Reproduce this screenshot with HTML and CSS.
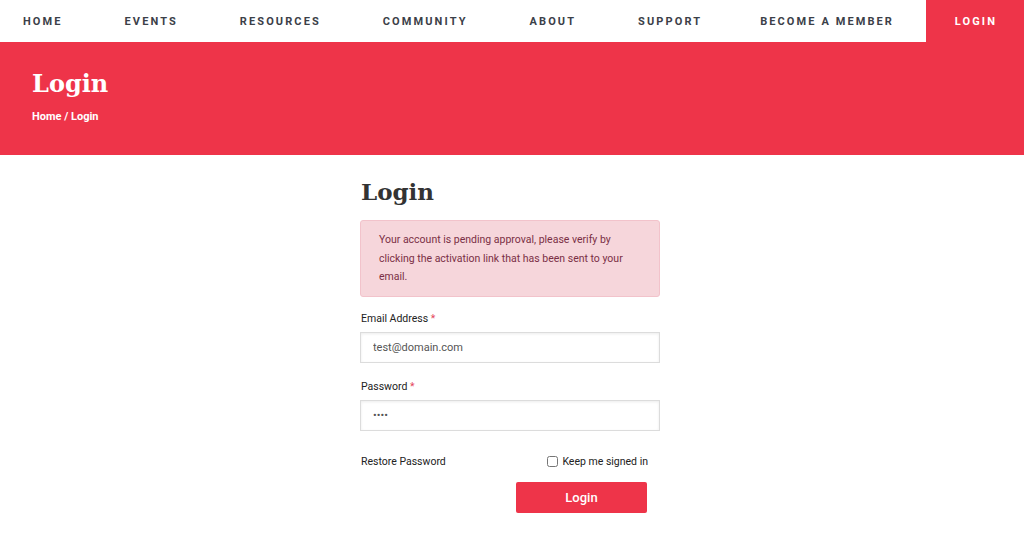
FILE: index.html
```html
<!DOCTYPE html>
<html lang="en">
  <head>
    <meta charset="UTF-8" />
    <meta name="viewport" content="width=device-width, initial-scale=1.0" />
    <title>Login</title>
    <link rel="stylesheet" href="styles.css">
  </head>
  <body>
    <nav class="nav">
      <a class="nav-item" href="#">Home</a>
      <a class="nav-item" href="#">Events</a>
      <a class="nav-item" href="#">Resources</a>
      <a class="nav-item" href="#">Community</a>
      <a class="nav-item" href="#">About</a>
      <a class="nav-item" href="#">Support</a>
      <a class="nav-item member" href="#">Become a Member</a>
      <a class="nav-item active" href="#">Login</a>
    </nav>
    <header class="banner">
      <h1 class="banner-title">Login</h1>
      <div class="crumbs"><a href="#">Home</a> / Login</div>
    </header>
    <main class="content">
      <h2 class="page-title">Login</h2>
      <div class="alert">
        Your account is pending approval, please verify by clicking the activation link that has been sent to your email.
      </div>
      <form class="form">
        <label class="label">Email Address <span class="req">*</span></label>
        <input class="input" type="text" value="test@domain.com" />
        <label class="label">Password <span class="req">*</span></label>
        <input class="input" type="password" value="test" />
        <div class="row">
          <a class="restore" href="#">Restore Password</a>
          <label class="keep"><input type="checkbox" class="check" /> Keep me signed in</label>
        </div>
        <div class="actions">
          <button class="btn" type="button">Login</button>
        </div>
      </form>
    </main>
  </body>
</html>
```

FILE: styles.css
```css
* {
  box-sizing: border-box;
}

body {
  margin: 0;
  font-family: Roboto, "Liberation Sans", sans-serif;
  color: #333;
  background: #fff;
}

a {
  color: inherit;
  text-decoration: none;
}

.nav {
  display: flex;
  height: 42px;
  padding-left: 23px;
}

.nav-item {
  display: flex;
  align-items: center;
  padding: 0 31px;
  font-size: 11px;
  font-weight: 700;
  letter-spacing: 2.1px;
  text-transform: uppercase;
  white-space: nowrap;
  color: #3b4048;
}

.nav-item:first-child {
  padding-left: 0;
}

.nav-item.member {
  padding-left: 27px;
}

.nav-item.active {
  margin-left: auto;
  padding: 0 27px 0 29px;
  background: #ee3449;
  color: #fff;
}

.banner {
  background: #ee3449;
  height: 113px;
  padding: 25px 32px 0;
  color: #fff;
}

.banner-title {
  margin: 0;
  font-family: "DejaVu Serif", "Liberation Serif", serif;
  font-size: 24px;
  font-weight: 700;
  line-height: 34px;
}

.crumbs {
  margin-top: 9px;
  font-size: 11px;
  font-weight: 700;
}

.content {
  width: 300px;
  margin: 0 auto;
  padding-top: 20px;
  transform: translateX(-2px);
}

.page-title {
  margin: 0 0 11px 1px;
  font-family: "DejaVu Serif", "Liberation Serif", serif;
  font-size: 23px;
  font-weight: 700;
  line-height: 34px;
  color: #333;
}

.alert {
  background: #f6d6db;
  border: 1px solid #f2c3cb;
  border-radius: 3px;
  padding: 10px 30px 9px 18px;
  font-size: 10.5px;
  line-height: 18.5px;
  color: #7a2f45;
}

.form {
  display: flex;
  flex-direction: column;
  padding-top: 15px;
}

.label {
  font-size: 10.5px;
  color: #222;
  margin: 0 0 7px 1px;
}

.req {
  color: #e4465a;
}

.input {
  height: 31px;
  width: 100%;
  border: 1px solid #dcdcdc;
  box-shadow: inset 0 1px 3px rgba(0, 0, 0, 0.08);
  padding: 0 12px;
  font-family: Roboto, "Liberation Sans", sans-serif;
  font-size: 11px;
  color: #555;
  margin-bottom: 17px;
  outline: none;
}

.row {
  display: flex;
  justify-content: space-between;
  align-items: center;
  margin-top: 7px;
  padding: 0 12px 0 1px;
  font-size: 10.5px;
  color: #222;
}

.keep {
  display: flex;
  align-items: center;
}

.check {
  margin: 0 4px 0 0;
  width: 11px;
  height: 11px;
}

.actions {
  display: flex;
  justify-content: flex-end;
  padding-right: 13px;
  margin-top: 14px;
}

.btn {
  width: 131px;
  height: 31px;
  border: 0;
  border-radius: 2px;
  background: #ee3449;
  color: #fff;
  font-family: Roboto, "Liberation Sans", sans-serif;
  font-size: 13px;
  font-weight: 500;
}
```
